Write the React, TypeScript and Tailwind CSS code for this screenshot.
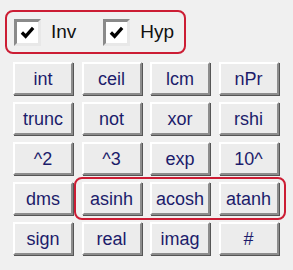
import React from 'react';

const ROWS = [
  ['int', 'ceil', 'lcm', 'nPr'],
  ['trunc', 'not', 'xor', 'rshi'],
  ['^2', '^3', 'exp', '10^'],
  ['dms', 'asinh', 'acosh', 'atanh'],
  ['sign', 'real', 'imag', '#'],
];

function CheckBox({ label }: { label: string }) {
  return (
    <div className="flex items-center gap-[10px]">
      <div className="w-[27px] h-[27px] bg-white border-[3px] border-t-[#8a8a8a] border-l-[#8a8a8a] border-b-[#e8e8e8] border-r-[#e8e8e8] flex items-center justify-center">
        <svg viewBox="0 0 16 16" className="w-[15px] h-[15px]">
          <path d="M2 8 L6 12 L14 3" fill="none" stroke="#000" strokeWidth="3.5" />
        </svg>
      </div>
      <span className="text-[19px] text-[#111]">{label}</span>
    </div>
  );
}

function Key({ label }: { label: string }) {
  return (
    <button className="w-[60px] h-[33px] bg-[#ececec] border-2 border-t-white border-l-white border-b-[#8c8c8c] border-r-[#8c8c8c] shadow-[1px_1px_0_#555] text-[18px] text-[#1c1c6b] leading-none flex items-center justify-center">
      {label}
    </button>
  );
}

export default function App() {
  return (
    <div className="relative w-[293px] h-[270px] bg-[#f0f0f0] overflow-hidden" style={{ fontFamily: '"Liberation Sans", Arial, sans-serif' }}>
      {/* Inv / Hyp toggles */}
      <div className="ml-[5px] mt-[10px] w-[181px] h-[44px] border-2 border-[#cc1d34] rounded-[8px] flex items-center gap-[27px] pl-[7px]">
        <CheckBox label="Inv" />
        <CheckBox label="Hyp" />
      </div>

      {/* Function keys */}
      <div className="ml-[13px] mt-[8px] grid grid-cols-[repeat(4,60px)] gap-x-[8.5px] gap-y-[7px]">
        {ROWS.flat().map((k, i) => (
          <Key key={i} label={k} />
        ))}
      </div>

      {/* Hyperbolic highlight */}
      <div className="absolute left-[74px] top-[177px] w-[212px] h-[43px] border-2 border-[#cc1d34] rounded-[8px] pointer-events-none" />
    </div>
  );
}
